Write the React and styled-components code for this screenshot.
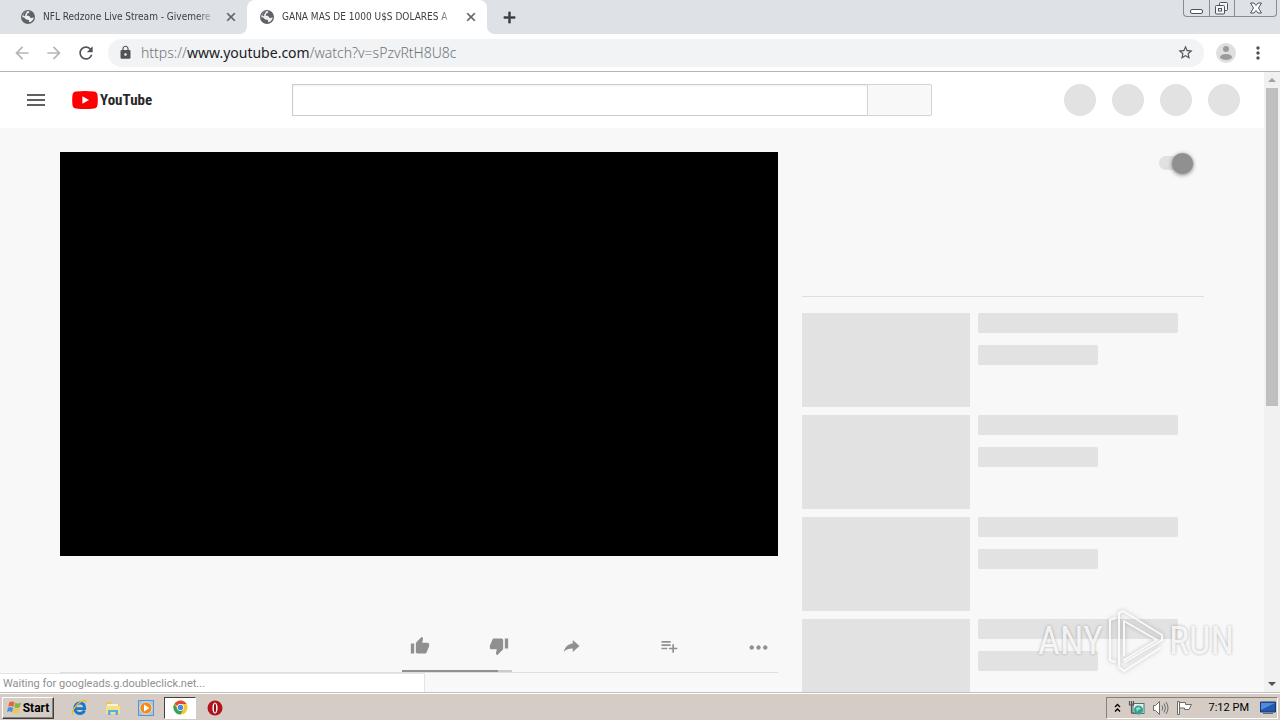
import React from "react";
import styled, { createGlobalStyle, css } from "styled-components";
import {
  MdClose,
  MdAdd,
  MdArrowBack,
  MdArrowForward,
  MdRefresh,
  MdLock,
  MdStarBorder,
  MdMoreVert,
  MdThumbUp,
  MdThumbDown,
  MdPlaylistAdd,
  MdMoreHoriz,
  MdMenu,
} from "react-icons/md";

const GlobalStyle = createGlobalStyle`
  *, *::before, *::after { box-sizing: border-box; }
  body { margin: 0; background: #f8f8f8; }
  button, input { font: inherit; margin: 0; }
`;

const Screen = styled.div`
  display: flex;
  flex-direction: column;
  height: 100vh;
  overflow: hidden;
  font-family: Roboto, "Liberation Sans", sans-serif;
  font-size: 11px;
`;

const plainButton = css`
  display: flex;
  align-items: center;
  justify-content: center;
  flex: none;
  padding: 0;
  border: 0;
  background: none;
  color: inherit;
`;

const heavyIcon = css`
  svg path:last-child {
    stroke: currentColor;
    stroke-width: 1px;
  }
`;

/* Tab strip */

const TabStrip = styled.header`
  display: flex;
  flex: none;
  height: 34px;
  padding-left: 8px;
  background: #dee1e6;
`;

const Tab = styled.div`
  position: relative;
  display: flex;
  align-items: center;
  gap: 7px;
  flex: 0 1 ${(p) => (p.$active ? 240 : 239)}px;
  min-width: 0;
  padding: 0 9px 0 12px;
  border-radius: 8px 8px 0 0;
  color: #3c4043;
  background: ${(p) => (p.$active ? "#fff" : "transparent")};

  ${(p) =>
    p.$active &&
    css`
      &::before,
      &::after {
        content: "";
        position: absolute;
        bottom: 0;
        width: 8px;
        height: 8px;
      }
      &::before {
        left: -8px;
        background: radial-gradient(circle at 0 0, #dee1e6 8px, #fff 8px);
      }
      &::after {
        right: -8px;
        background: radial-gradient(circle at 100% 0, #dee1e6 8px, #fff 8px);
      }
    `}

  > svg {
    flex: none;
    color: #5f6368;
  }
`;

const TabTitle = styled.span`
  flex: 1;
  min-width: 0;
  overflow: hidden;
  white-space: nowrap;
  font-family: "DejaVu Sans Condensed", "DejaVu Sans", sans-serif;
  font-size: 10px;
  line-height: 16px;
  mask-image: linear-gradient(to right, #000 calc(100% - 20px), transparent);
`;

const TabButton = styled.button`
  ${plainButton}
  ${heavyIcon}
  width: 14px;
  color: #5f6368;
`;

const NewTab = styled.button`
  ${plainButton}
  ${heavyIcon}
  width: 28px;
  margin-left: 8px;
  color: #3c4043;
`;

const WindowControls = styled.div`
  display: flex;
  height: 17px;
  margin: 0 3px 0 auto;
  border: 1px solid #858b98;
  border-top: 0;
  border-radius: 0 0 4px 4px;
`;

const WindowButton = styled.button`
  ${plainButton}
  width: ${(p) => (p.$wide ? 42 : 25)}px;
  color: #4c5260;
  & + & {
    border-left: 1px solid #858b98;
  }
`;

/* Address bar */

const Toolbar = styled.nav`
  display: flex;
  align-items: center;
  flex: none;
  height: 38px;
  padding: 0 6px;
  background: #fff;
  border-bottom: 1px solid #b2b4b6;
`;

const ToolButton = styled.button`
  ${plainButton}
  width: 32px;
  height: 32px;
  color: ${(p) => (p.$dim ? "#b4b6b9" : "#505459")};
`;

const Omnibox = styled.div`
  display: flex;
  align-items: center;
  gap: 8px;
  flex: 1;
  min-width: 0;
  height: 28px;
  margin: 0 6px;
  padding: 0 10px;
  border-radius: 14px;
  background: #f1f3f4;
  color: #505459;
`;

const Address = styled.div`
  flex: 1;
  min-width: 0;
  overflow: hidden;
  white-space: nowrap;
  font-family: "Noto Sans", sans-serif;
  font-size: 14px;
  font-weight: 300;
  line-height: 20px;
  color: #6f757a;
  b {
    font-weight: 400;
    color: #202124;
  }
`;

const ProfileButton = styled.button`
  ${plainButton}
  width: 32px;
  height: 32px;
`;

/* Page */

const Viewport = styled.div`
  position: relative;
  display: flex;
  flex: 1;
  min-height: 0;
`;

const Page = styled.div`
  flex: 1;
  min-width: 0;
  overflow: hidden;
  background: #f8f8f8;
`;

const Masthead = styled.div`
  display: flex;
  align-items: center;
  height: 56px;
  padding: 0 24px;
  background: #fff;
`;

const Brand = styled.div`
  display: flex;
  align-items: center;
  gap: 24px;
  flex: 0 0 268px;
`;

const GuideButton = styled.button`
  ${plainButton}
  width: 24px;
  height: 24px;
  color: #606060;
`;

const Logo = styled.a`
  display: flex;
  align-items: center;
  gap: 2px;
  color: #282828;
  text-decoration: none;
  font-family: "Roboto Condensed", "Liberation Sans Narrow", "Liberation Sans", sans-serif;
  font-size: 15px;
  font-weight: 700;
  line-height: 20px;
`;

const Search = styled.form`
  display: flex;
  flex: 0 1 640px;
  height: 32px;
`;

const SearchInput = styled.input`
  flex: 1;
  min-width: 0;
  padding: 2px 6px;
  border: 1px solid #ccc;
  border-right: 0;
  background: #fff;
  box-shadow: inset 0 1px 2px #eee;
  outline: none;
`;

const SearchButton = styled.button`
  width: 65px;
  border: 1px solid #d3d3d3;
  border-radius: 0 2px 2px 0;
  background: #f8f8f8;
`;

const HeaderActions = styled.div`
  display: flex;
  gap: 16px;
  margin-left: auto;
`;

const Bubble = styled.button`
  width: 32px;
  height: 32px;
  padding: 0;
  border: 0;
  border-radius: 50%;
  background: #e2e2e2;
`;

const Watch = styled.main`
  display: flex;
  gap: 24px;
  padding: 24px 60px 0;
`;

const Primary = styled.section`
  flex: 1;
  min-width: 0;
`;

const Player = styled.div`
  aspect-ratio: 16 / 9;
  background: #000;
`;

const Actions = styled.div`
  display: flex;
  justify-content: flex-end;
  height: 117px;
  padding-top: 66px;
  border-bottom: 1px solid #dedede;
`;

const Sentiment = styled.div`
  width: 110px;
`;

const SentimentButtons = styled.div`
  display: flex;
  justify-content: space-between;
  padding: 0 3px 0 8px;
`;

const SentimentBar = styled.div`
  height: 2px;
  background: linear-gradient(to right, #909090 87%, #ccc 87%);
`;

const Action = styled.button`
  ${plainButton}
  width: ${(p) => p.$width}px;
  height: 48px;
  color: #909090;
`;

const MoreAction = styled(Action)`
  height: 52px;
  margin-left: 32px;
`;

const Secondary = styled.aside`
  flex: 0 0 402px;
`;

const Autoplay = styled.div`
  display: flex;
  justify-content: flex-end;
  height: 145px;
  padding-right: 10px;
  border-bottom: 1px solid #dedede;
`;

const Toggle = styled.input`
  appearance: none;
  position: relative;
  width: 35px;
  height: 14px;
  margin: 4px 0 0;
  border-radius: 7px;
  background: #e1e1e1;
  &::after {
    content: "";
    position: absolute;
    top: -3px;
    right: 1px;
    width: 21px;
    height: 21px;
    border-radius: 50%;
    background: #909090;
    box-shadow: 0 1px 4px rgba(0, 0, 0, 0.5);
  }
`;

const Related = styled.ul`
  display: flex;
  flex-direction: column;
  gap: 8px;
  margin: 16px 0 0;
  padding: 0;
  list-style: none;
`;

const RelatedItem = styled.li`
  display: flex;
  gap: 8px;
`;

const Thumb = styled.div`
  width: 168px;
  height: 94px;
  border-radius: 1px;
  background: #e2e2e2;
`;

const Lines = styled.div`
  display: flex;
  flex-direction: column;
  gap: 12px;
`;

const Line = styled.div`
  width: ${(p) => p.$width}px;
  height: 20px;
  border-radius: 2px;
  background: #e2e2e2;
`;

const Scrollbar = styled.div`
  display: flex;
  flex-direction: column;
  flex: 0 0 16px;
  padding: 0 2px;
  background: #f1f1f1;
`;

const ScrollArrow = styled.button`
  ${plainButton}
  height: 16px;
  color: ${(p) => (p.$dim ? "#a0a0a0" : "#505050")};
`;

const Track = styled.div`
  flex: 1;
`;

const ScrollThumb = styled.div`
  height: 54%;
  background: #bfbfbf;
`;

const StatusBubble = styled.div`
  position: absolute;
  left: 0;
  bottom: 0;
  width: 425px;
  height: 19px;
  padding-left: 3px;
  border-top: 1px solid #e4e4e4;
  border-right: 1px solid #e4e4e4;
  background: #fff;
  color: #909090;
  line-height: 19px;
`;

const Watermark = styled.div`
  position: absolute;
  right: 46px;
  bottom: 19px;
  display: flex;
  align-items: center;
  gap: 4px;
  color: rgba(255, 255, 255, 0.85);
  font-family: "Roboto Condensed", "Liberation Sans Narrow", "Liberation Sans", sans-serif;
  font-size: 38px;
  line-height: 64px;
  text-shadow: 0 0 3px rgba(0, 0, 0, 0.3);
  svg {
    filter: drop-shadow(0 0 2px rgba(0, 0, 0, 0.3));
  }
`;

/* Taskbar */

const Taskbar = styled.footer`
  display: flex;
  align-items: center;
  flex: none;
  height: 28px;
  padding: 2px 2px 0;
  border-top: 1px solid #c4c0ba;
  box-shadow: inset 0 1px #fff;
  background: #d5cdc5;
  color: #000;
`;

const StartButton = styled.button`
  ${plainButton}
  gap: 1px;
  width: 52px;
  height: 22px;
  border: 1px solid;
  border-color: #fff #404040 #404040 #fff;
  box-shadow: inset -1px -1px #858078;
  font-size: 12px;
  font-weight: 700;
`;

const QuickLaunch = styled.div`
  display: flex;
  align-items: center;
  margin-left: 9px;
`;

const Launcher = styled.button`
  ${plainButton}
  width: ${(p) => (p.$active ? 32 : 33)}px;
  height: 22px;
  ${(p) =>
    p.$active &&
    css`
      margin: 0 2px;
      border: 1px solid;
      border-color: #404040 #fff #fff #404040;
      background: #fff;
    `}
`;

const Tray = styled.div`
  display: flex;
  align-items: center;
  gap: 7px;
  height: 22px;
  margin-left: auto;
  padding: 0 1px 0 7px;
  border: 1px solid;
  border-color: #858078 #fff #fff #858078;
`;

const Clock = styled.time`
  margin: 0 4px 0 9px;
  white-space: nowrap;
`;

const GlobeIcon = () => (
  <svg width="16" height="16" viewBox="0 0 16 16" aria-hidden="true">
    <circle cx="8" cy="8" r="7" fill="currentColor" />
    <path d="M8.600 2.300C10 2.400 9.500 4 8 4.200 6.800 4.500 7.600 5.600 6.500 6 6.300 6.900 8 6.600 9 7c1.200.6.800 1.800 2 1.900 1 .1 1.700-.6 2.700-.5-.3 2.400-2 4.300-4.300 4.900-.8-.4.200-1.600-.7-2.200C7.600 10.500 5.500 10.300 4.900 9.200 4.300 8.300 3.300 8.200 2.400 8.400 2.300 4.800 5 2.100 8.600 2.300z" fill="#fff" fillOpacity=".9" />
    <path d="M3.200 5.600C4 3.500 5.500 2.500 7.200 2.300 6.200 3.200 6.800 4 5.700 4.800 5 5.500 5.400 6.300 5 7 4.200 7.600 3.300 6.800 3.200 5.600z" fill="currentColor" />
  </svg>
);

const YouTubeMark = () => (
  <svg width="26" height="18" viewBox="0 0 26 18" aria-hidden="true">
    <path d="M4 .5Q13-.5 22 .5 25 .8 25.500 4q.6 5 0 10-.5 3.200-3.500 3.500-9 1-18 0Q1 17.200.5 14-.1 9 .5 4 1 .8 4 .5z" fill="#f00" />
    <path d="M10.400 5.200v7.600L17 9z" fill="#fff" />
  </svg>
);

const ShareIcon = () => (
  <svg width="18" height="18" viewBox="0 0 24 24" fill="currentColor" aria-hidden="true">
    <path d="M13 8.500V4l9 8-9 8v-4.600c-5.300 0-8.800 1.200-12 4.600C2.500 13.500 6 9.200 13 8.500z" />
  </svg>
);

const ProfileIcon = () => (
  <svg width="20" height="20" viewBox="0 0 20 20" aria-hidden="true">
    <circle cx="10" cy="10" r="10" fill="#dfdfdf" />
    <circle cx="10" cy="6" r="3" fill="#9b9b9b" />
    <ellipse cx="10" cy="14" rx="6" ry="3" fill="#9b9b9b" />
  </svg>
);

const MinimizeIcon = () => (
  <svg width="13" height="14" viewBox="0 0 13 14" fill="#fff" stroke="currentColor" aria-hidden="true">
    <rect x=".5" y="8.500" width="12" height="4" rx="1.500" />
  </svg>
);

const RestoreIcon = () => (
  <svg width="14" height="14" viewBox="0 0 14 14" fill="#f4f5f7" stroke="currentColor" aria-hidden="true">
    <rect x="4.500" y="1.500" width="8" height="8" rx="1" />
    <rect x=".5" y="4.500" width="9" height="8.500" rx="1" />
    <rect x="3.500" y="7.500" width="3" height="2.500" />
  </svg>
);

const WindowCloseIcon = () => (
  <svg width="14" height="12" viewBox="0 0 14 12" fill="#fff" stroke="currentColor" aria-hidden="true">
    <path d="M1.500 1h3.500l2 2.500L9 1h3.500L9.500 6l3 5H9L7 8.500 5 11H1.500l3-5z" />
  </svg>
);

const Arrow = ({ down }) => (
  <svg width="8" height="4" viewBox="0 0 8 4" fill="currentColor" aria-hidden="true">
    <path d={down ? "M0 0h8L4 4z" : "M0 4h8L4 0z"} />
  </svg>
);

const PlayOutline = () => (
  <svg width="58" height="64" viewBox="0 0 58 64" fill="none" stroke="rgba(255,255,255,.85)" strokeWidth="2" strokeLinejoin="round" strokeLinecap="round" aria-hidden="true">
    <path d="M8 9L3 11v40l5 2" />
    <path d="M12 56V4l4-2 39 24v5L18 53" />
    <path d="M17 46V12l33 19-33 20" />
    <path d="M12 58l5 4 36-23" />
  </svg>
);

const WindowsFlag = () => (
  <svg width="15" height="15" viewBox="0 0 16 16" aria-hidden="true">
    <path d="M2.500 2.500C4.500 1 6 1.300 8 2.500L6.800 7.300C5 6 3 6.200 1.300 7.200z" fill="#e8643c" />
    <path d="M8.800 3c2 1 4 1 6.200-.3l-1.300 4.800c-2 1.200-4 1.300-6 .2z" fill="#7fb93f" />
    <path d="M1 8.200c2-1.200 3.800-1 5.600.2L5.300 13C3.500 11.800 2 11.800 0 13z" fill="#4a8fd8" />
    <path d="M7.400 8.800c2 1 4 .9 6-.2l-1.300 4.700c-2 1.200-4 1.200-6 .1z" fill="#f4c542" />
  </svg>
);

const ExplorerIcon = () => (
  <svg width="17" height="17" viewBox="0 0 17 17" fill="none" aria-hidden="true">
    <path d="M13.500 11.500c-1 2-2.600 3-4.700 3-3 0-5-2.200-5-5.300 0-3 2-5.200 5-5.200 3.200 0 4.900 2.300 4.900 5.600H5" stroke="#1976c8" strokeWidth="2.800" />
    <path d="M2 15.500C-.5 13 5.500 4.500 11 2.200c3-1.200 4.500-.7 4.200 1.300" stroke="#e9b93c" strokeWidth="1.400" />
  </svg>
);

const FolderIcon = () => (
  <svg width="16" height="16" viewBox="0 0 16 16" aria-hidden="true">
    <path d="M1 2h5l1 2h7v9H1z" fill="#e9c65a" />
    <path d="M2 4h11v3H2z" fill="#f8f3cf" />
    <path d="M1 6h14v8H1z" fill="#f6df8b" />
    <path d="M3 15v-5h10v5h-2.500v-3h-5v3z" fill="#58aede" />
  </svg>
);

const MediaIcon = () => (
  <svg width="16" height="16" viewBox="0 0 16 16" aria-hidden="true">
    <rect x=".5" y=".5" width="15" height="15" fill="#9fc7e8" stroke="#5f94c4" />
    <circle cx="8" cy="8" r="6" fill="#f28a1c" stroke="#fff" strokeWidth=".6" />
    <path d="M6 4.500v7L11.500 8z" fill="#fff" />
  </svg>
);

const ChromeIcon = () => (
  <svg width="15" height="15" viewBox="0 0 16 16" aria-hidden="true">
    <circle cx="8" cy="8" r="7.500" fill="#f6c927" />
    <path d="M8 8L1.500 4.250A7.500 7.500 0 0 1 14.500 4.250H8z" fill="#df4a3a" />
    <path d="M1.500 4.250A7.500 7.500 0 0 0 8 15.500L11.200 9.800 8 8 4.800 9.800z" fill="#3ba158" />
    <circle cx="8" cy="8" r="3.700" fill="#fff" />
    <circle cx="8" cy="8" r="2.900" fill="#4a87e8" />
  </svg>
);

const OperaIcon = () => (
  <svg width="16" height="16" viewBox="0 0 16 16" aria-hidden="true">
    <circle cx="8" cy="8" r="7.500" fill="#b3141b" />
    <ellipse cx="8" cy="8" rx="2.600" ry="5.500" fill="#fff" />
    <ellipse cx="8" cy="8" rx="1.100" ry="4.600" fill="#8c1016" />
  </svg>
);

const ChevronsIcon = () => (
  <svg width="7" height="10" viewBox="0 0 7 10" fill="none" stroke="#000" strokeWidth="1.400" aria-hidden="true">
    <path d="M1 4l2.500-2.500L6 4M1 8.500L3.500 6 6 8.500" />
  </svg>
);

const NetworkIcon = () => (
  <svg width="17" height="16" viewBox="0 0 17 16" aria-hidden="true">
    <rect x="5" y="3.500" width="11" height="10" fill="#dff0f0" stroke="#4c7377" />
    <circle cx="10.500" cy="10" r="4.500" fill="#35a08e" />
    <path d="M8 8l3-1 2 2-3 1-1 2z" fill="#9fe0d0" />
    <path d="M1.500 1v4h4V1M3.500 1v4m0 0v8h4" fill="none" stroke="#555" strokeWidth="1.200" />
  </svg>
);

const SpeakerIcon = () => (
  <svg width="17" height="16" viewBox="0 0 17 16" fill="none" stroke="#6d6a66" aria-hidden="true">
    <path d="M1.500 5.500h2l4-4v13l-4-4h-2z" fill="#fff" />
    <path d="M10 5.500q1.500 2.500 0 5M12 3.500q3 4.500 0 9M14 2q4 6 0 12" />
  </svg>
);

const FlagIcon = () => (
  <svg width="17" height="16" viewBox="0 0 17 16" fill="#fff" stroke="#6d6a66" aria-hidden="true">
    <path d="M1.500 1.500h2v13h-2zM3.500 2.500h6v2h6l-2.500 5H8.500v-1.500h-5z" />
  </svg>
);

const DesktopIcon = () => (
  <svg width="16" height="14" viewBox="0 0 16 14" aria-hidden="true">
    <path d="M.5 1h15v10H.5z" fill="#2458ae" stroke="#16386f" />
    <path d="M1 2h14L1 9z" fill="#4d8bdc" />
    <path d="M3 12.500h10" stroke="#5c6f8a" />
  </svg>
);

const tabs = [
  { title: "NFL Redzone Live Stream - Givemere", active: false },
  { title: "GANA MAS DE 1000 U$S DOLARES A", active: true },
];

export default function App() {
  return (
    <Screen>
      <GlobalStyle />
      <TabStrip>
        {tabs.map((tab) => (
          <Tab key={tab.title} $active={tab.active}>
            <GlobeIcon />
            <TabTitle>{tab.title}</TabTitle>
            <TabButton aria-label="Close tab">
              <MdClose size={14} />
            </TabButton>
          </Tab>
        ))}
        <NewTab aria-label="New tab">
          <MdAdd size={19} />
        </NewTab>
        <WindowControls>
          <WindowButton aria-label="Minimize"><MinimizeIcon /></WindowButton>
          <WindowButton aria-label="Restore"><RestoreIcon /></WindowButton>
          <WindowButton aria-label="Close" $wide><WindowCloseIcon /></WindowButton>
        </WindowControls>
      </TabStrip>

      <Toolbar>
        <ToolButton aria-label="Back" $dim><MdArrowBack size={20} /></ToolButton>
        <ToolButton aria-label="Forward" $dim><MdArrowForward size={20} /></ToolButton>
        <ToolButton aria-label="Reload"><MdRefresh size={20} /></ToolButton>
        <Omnibox>
          <MdLock size={15} />
          <Address>https://<b>www.youtube.com</b>/watch?v=sPzvRtH8U8c</Address>
          <MdStarBorder size={17} />
        </Omnibox>
        <ProfileButton aria-label="Profile"><ProfileIcon /></ProfileButton>
        <ToolButton aria-label="Menu"><MdMoreVert size={20} /></ToolButton>
      </Toolbar>

      <Viewport>
        <Page>
          <Masthead>
            <Brand>
              <GuideButton aria-label="Guide"><MdMenu size={24} /></GuideButton>
              <Logo href="#" aria-label="YouTube">
                <YouTubeMark />
                YouTube
              </Logo>
            </Brand>
            <Search>
              <SearchInput type="text" aria-label="Search" />
              <SearchButton type="button" aria-label="Search" />
            </Search>
            <HeaderActions>
              {["Create", "Apps", "Notifications", "Account"].map((name) => (
                <Bubble key={name} aria-label={name} />
              ))}
            </HeaderActions>
          </Masthead>

          <Watch>
            <Primary>
              <Player />
              <Actions>
                <Sentiment>
                  <SentimentButtons>
                    <Action $width={20} aria-label="Like"><MdThumbUp size={20} /></Action>
                    <Action $width={20} aria-label="Dislike"><MdThumbDown size={20} /></Action>
                  </SentimentButtons>
                  <SentimentBar />
                </Sentiment>
                <Action $width={120} aria-label="Share"><ShareIcon /></Action>
                <Action $width={74} aria-label="Save"><MdPlaylistAdd size={20} /></Action>
                <MoreAction $width={40} aria-label="More actions"><MdMoreHoriz size={27} /></MoreAction>
              </Actions>
            </Primary>
            <Secondary>
              <Autoplay>
                <Toggle type="checkbox" defaultChecked aria-label="Autoplay" />
              </Autoplay>
              <Related>
                {[1, 2, 3, 4].map((n) => (
                  <RelatedItem key={n}>
                    <Thumb />
                    <Lines>
                      <Line $width={200} />
                      <Line $width={120} />
                    </Lines>
                  </RelatedItem>
                ))}
              </Related>
            </Secondary>
          </Watch>
        </Page>
        <Scrollbar>
          <ScrollArrow aria-label="Scroll up" $dim><Arrow /></ScrollArrow>
          <Track><ScrollThumb /></Track>
          <ScrollArrow aria-label="Scroll down"><Arrow down /></ScrollArrow>
        </Scrollbar>
        <StatusBubble role="status">Waiting for googleads.g.doubleclick.net...</StatusBubble>
        <Watermark>
          <span>ANY</span>
          <PlayOutline />
          <span>RUN</span>
        </Watermark>
      </Viewport>

      <Taskbar>
        <StartButton><WindowsFlag />Start</StartButton>
        <QuickLaunch>
          <Launcher aria-label="Internet Explorer"><ExplorerIcon /></Launcher>
          <Launcher aria-label="File Explorer"><FolderIcon /></Launcher>
          <Launcher aria-label="Media Player"><MediaIcon /></Launcher>
          <Launcher aria-label="Chrome" $active><ChromeIcon /></Launcher>
          <Launcher aria-label="Opera"><OperaIcon /></Launcher>
        </QuickLaunch>
        <Tray>
          <ChevronsIcon />
          <NetworkIcon />
          <SpeakerIcon />
          <FlagIcon />
          <Clock>7:12 PM</Clock>
          <DesktopIcon />
        </Tray>
      </Taskbar>
    </Screen>
  );
}
